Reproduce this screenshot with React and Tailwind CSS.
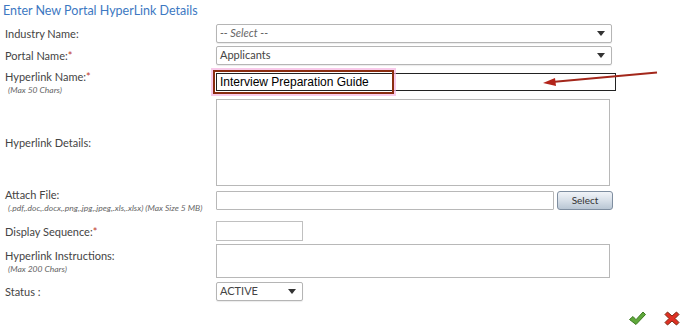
const font = { fontFamily: 'Lato, "Open Sans", sans-serif' }

function Caret() {
  return (
    <svg width="8" height="5" viewBox="0 0 8 5" className="shrink-0">
      <path d="M0 0h8L4 5z" fill="#333" />
    </svg>
  )
}

function Label({ text, req, note }) {
  return (
    <div className="flex w-[216px] shrink-0 flex-col pl-[5px]">
      <span className="text-[11px] leading-[13px] text-[#444]">
        {text}
        {req && <span className="text-[#c0392b]">*</span>}
      </span>
      {note && <span className="mt-[2px] whitespace-nowrap pl-[3px] text-[8.5px] italic leading-[10px] text-[#666]">{note}</span>}
    </div>
  )
}

function Row({ label, req, note, className = '', children }) {
  return (
    <div className={`flex items-center ${className}`}>
      <Label text={label} req={req} note={note} />
      {children}
    </div>
  )
}

function SelectBox({ value, italic, w = 'w-[396px]' }) {
  return (
    <div className={`flex h-[19px] ${w} items-center justify-between rounded-[2px] border border-[#b5b5b5] bg-white px-[3px] pr-[6px] shadow-[0_1px_1px_rgba(0,0,0,0.08)]`}>
      <span className={`text-[11px] ${italic ? 'italic text-[#666]' : 'text-[#444]'}`}>{value}</span>
      <Caret />
    </div>
  )
}

export default function App() {
  return (
    <div className="relative h-[330px] w-[688px] overflow-hidden bg-white" style={font}>
      <h1 className="h-[21px] pl-[3px] text-[12.5px] leading-[21px] text-[#3d78c2]">Enter New Portal HyperLink Details</h1>

      <Row label="Industry Name:" className="mt-[3px] h-[19px]">
        <SelectBox value="-- Select --" italic />
      </Row>

      <Row label="Portal Name:" req className="mt-[3px] h-[19px]">
        <SelectBox value="Applicants" />
      </Row>

      <Row label="Hyperlink Name:" req note="(Max 50 Chars)" className="mt-[8px] h-[18px]">
        <div className="flex h-[18px] w-[400px] items-center border border-[#222] bg-white px-[3px] text-[12px] text-black" style={{ fontFamily: '"Liberation Sans", Arial, sans-serif' }}>
          Interview Preparation Guide
        </div>
      </Row>

      <Row label="Hyperlink Details:" className="mt-[8px] h-[87px]">
        <div className="h-[87px] w-[394px] border border-[#b8b8b8] bg-white" />
      </Row>

      <Row label="Attach File:" note="(.pdf,.doc,.docx,.png,.jpg,.jpeg,.xls,.xlsx) (Max Size 5 MB)" className="mt-[5px] h-[19px]">
        <div className="flex items-center gap-[3px]">
          <div className="h-[19px] w-[338px] rounded-[1px] border border-[#b8b8b8] bg-white" />
          <button className="h-[19px] w-[56px] rounded-[3px] border border-[#7f8ea0] bg-gradient-to-b from-[#f1f4f8] via-[#d7dfe8] to-[#b9c6d4] text-[10px] text-[#333]">
            Select
          </button>
        </div>
      </Row>

      <Row label="Display Sequence:" req className="mt-[11px] h-[20px]">
        <div className="h-[20px] w-[87px] border border-[#c0c0c0] bg-white" />
      </Row>

      <Row label="Hyperlink Instructions:" note="(Max 200 Chars)" className="mt-[3px] h-[34px]">
        <div className="h-[34px] w-[394px] border border-[#b8b8b8] bg-white" />
      </Row>

      <Row label="Status :" className="mt-[4px] h-[19px]">
        <SelectBox value="ACTIVE" w="w-[87px]" />
      </Row>

      <div className="mt-[10px] flex justify-end gap-[18px] pr-[8px]">
        <svg width="18" height="15" viewBox="0 0 18 15">
          <path d="M1.5 8.5l3.5-3 3 3.2L15 1l2.5 2.5L8 13.5z" fill="#5fa83a" stroke="#3d7a22" strokeWidth="1" strokeLinejoin="round" />
        </svg>
        <svg width="16" height="15" viewBox="0 0 16 15">
          <path d="M1 3.5L3.5 1 8 5l4.5-4L15 3.5l-4 4 4 4L12.5 14 8 10l-4.5 4L1 11.5l4-4z" fill="#e03024" stroke="#7a2a12" strokeWidth="1" strokeLinejoin="round" />
        </svg>
      </div>

      {/* annotation overlay */}
      <div className="pointer-events-none absolute left-[213px] top-[70px] h-[24px] w-[181px] border-2 border-[#8a2c10] shadow-[0_0_0_2px_rgba(245,180,225,0.7)]" />
      <svg className="pointer-events-none absolute left-0 top-0" width="688" height="330">
        <line x1="657" y1="72.5" x2="552" y2="82" stroke="#a3271b" strokeWidth="2" />
        <path d="M543 83l12-5 1 8z" fill="#b3241a" />
      </svg>
    </div>
  )
}
